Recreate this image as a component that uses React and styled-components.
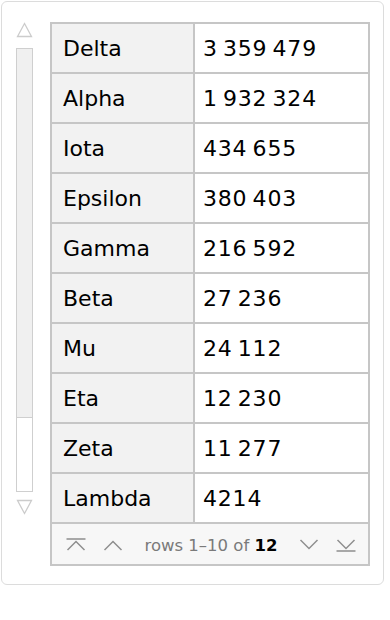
import styled, { createGlobalStyle } from 'styled-components';

const GlobalStyle = createGlobalStyle`
  html, body {
    margin: 0;
    padding: 0;
    background: #fff;
  }
  body {
    font-family: "DejaVu Sans", Verdana, sans-serif;
  }
`;

const rows = [
  ['Delta', '3\u2009359\u2009479'],
  ['Alpha', '1\u2009932\u2009324'],
  ['Iota', '434\u2009655'],
  ['Epsilon', '380\u2009403'],
  ['Gamma', '216\u2009592'],
  ['Beta', '27\u2009236'],
  ['Mu', '24\u2009112'],
  ['Eta', '12\u2009230'],
  ['Zeta', '11\u2009277'],
  ['Lambda', '4214'],
];

const Panel = styled.div`
  display: inline-flex;
  align-items: stretch;
  gap: 16px;
  margin: 1px;
  padding: 20px 13px 18px 13px;
  border: 1px solid #dcdcdc;
  border-radius: 6px;
`;

const ScrollCol = styled.div`
  width: 19px;
  display: flex;
  flex-direction: column;
  align-items: center;
`;

const Arrow = styled.svg`
  width: 17px;
  height: 16px;
  flex: none;
  margin: ${(p) => (p.$down ? '7px 0 0' : '0 0 10px')};
`;

const Track = styled.div`
  width: 17px;
  height: 444px;
  border: 1px solid #cfcfcf;
  display: flex;
  flex-direction: column;
  box-sizing: border-box;
`;

const Thumb = styled.div`
  flex: none;
  background: #f0f0f0;
  border-bottom: 1px solid #cfcfcf;
`;

const Table = styled.table`
  border-collapse: collapse;
  border: 2px solid #c6c6c6;
  font-size: 22px;
  color: #000;
`;

const Cell = styled.td`
  height: 48px;
  padding: 0 10px 0 ${(p) => (p.$key ? '11px' : '8px')};
  border: 2px solid #c6c6c6;
  background: ${(p) => (p.$key ? '#f2f2f2' : '#fff')};
  width: ${(p) => (p.$key ? '120px' : '155px')};
  box-sizing: content-box;
  white-space: nowrap;
  letter-spacing: ${(p) => (p.$key ? '0' : '0.8px')};
`;

const FootCell = styled.td`
  height: 40px;
  padding: 0;
  border: 2px solid #c6c6c6;
  background: #f7f7f7;
`;

const Footer = styled.div`
  display: flex;
  align-items: center;
  justify-content: space-between;
  padding: 2px 12px 0 14px;
  font-size: 16.5px;
  color: #7a7a7a;
`;

const Count = styled.span`
  margin: 0 4px;
  b {
    color: #000;
  }
`;

const NavIcon = ({ kind }) => {
  const up = kind === 'first' || kind === 'prev';
  const bar = kind === 'first' || kind === 'last';
  const caret = up ? 'M1.5 13 L10 4.5 L18.5 13' : 'M1.5 3 L10 11.5 L18.5 3';
  return (
    <svg width="20" height="16" viewBox="0 0 20 16" fill="none" stroke="#8e8e8e" strokeWidth="1.5">
      <path d={caret} />
      {bar && <path d={up ? 'M0.5 2 H19.5' : 'M0.5 14 H19.5'} />}
    </svg>
  );
};

export default function App() {
  return (
    <>
      <GlobalStyle />
      <Panel>
        <ScrollCol>
          <Arrow viewBox="0 0 17 16">
            <path d="M8.5 1.5 L15.5 14.5 H1.5 Z" fill="none" stroke="#cccccc" strokeWidth="1.3" />
          </Arrow>
          <Track>
            <Thumb style={{ height: `${(10 / 12) * 100}%` }} />
          </Track>
          <Arrow $down viewBox="0 0 17 16">
            <path d="M1.5 1.5 H15.5 L8.5 14.5 Z" fill="none" stroke="#cccccc" strokeWidth="1.3" />
          </Arrow>
        </ScrollCol>
        <Table>
          <tbody>
            {rows.map(([name, value]) => (
              <tr key={name}>
                <Cell $key>{name}</Cell>
                <Cell>{value}</Cell>
              </tr>
            ))}
            <tr>
              <FootCell colSpan={2}>
                <Footer>
                  <NavIcon kind="first" />
                  <NavIcon kind="prev" />
                  <Count>
                    rows 1–10 of <b>12</b>
                  </Count>
                  <NavIcon kind="next" />
                  <NavIcon kind="last" />
                </Footer>
              </FootCell>
            </tr>
          </tbody>
        </Table>
      </Panel>
    </>
  );
}
